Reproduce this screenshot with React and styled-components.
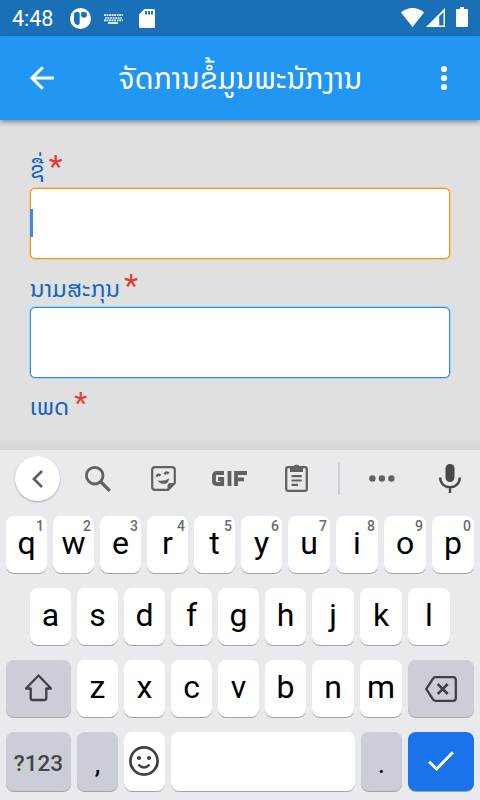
import React from "react";
import styled, { createGlobalStyle } from "styled-components";

const lao = `"Noto Sans Lao", "DejaVu Sans", sans-serif`;

const GlobalStyle = createGlobalStyle`
  * { box-sizing: border-box; }
  body { margin: 0; background: #e0e0e0; overflow: hidden; }
`;

const Screen = styled.div`
  width: 480px;
  height: 800px;
  display: flex;
  flex-direction: column;
  overflow: hidden;
  background: #e0e0e0;
  font-family: Roboto, sans-serif;
`;

const StatusBar = styled.header`
  height: 36px;
  flex: none;
  display: flex;
  align-items: center;
  padding: 0 12px;
  background: #1a70b7;
  color: #fff;
`;

const Clock = styled.time`
  width: 58px;
  font-size: 21.5px;
  line-height: 36px;
  padding-top: 2px;
`;

const Glyph = styled.svg`
  display: block;
  flex: none;
  width: ${(p) => p.$w}px;
  height: ${(p) => p.$h}px;
  margin-left: ${(p) => p.$left || 0}px;
  margin-top: ${(p) => p.$top || 0}px;
  overflow: visible;
`;

const StatusGroup = styled.div`
  display: flex;
  align-items: center;
  margin-left: ${(p) => (p.$end ? "auto" : "0")};
`;

const AppBar = styled.div`
  height: 84px;
  flex: none;
  display: flex;
  align-items: center;
  padding: 0 32px 0 30px;
  background: #2196f3;
  color: #fff;
  box-shadow: 0 2px 5px rgba(0, 0, 0, 0.42);
  z-index: 1;
`;

const IconButton = styled.button`
  display: flex;
  padding: 0;
  border: 0;
  background: none;
  color: inherit;
`;

const Title = styled.h1`
  flex: 1;
  margin: 2px 0 0 64px;
  font: 400 29.65px/40px ${lao};
  white-space: nowrap;
`;

const Form = styled.main`
  height: 330px;
  flex: none;
  padding: 32px 30px 0;
  overflow: hidden;
  background: linear-gradient(#e0e0e0 318px, #d5d5d5 330px);
`;

const Label = styled.label`
  display: flex;
  height: 36px;
  gap: ${(p) => p.$gap || 4}px;
  color: #1565c0;
  font: 400 23.8px/${(p) => p.$line || 36}px ${lao};
  white-space: nowrap;
`;

const Required = styled.span`
  color: #e53935;
  font: 400 ${(p) => p.$size || 32}px/${(p) => p.$line || 28}px Roboto, sans-serif;
`;

const Field = styled.div`
  height: 71px;
  display: flex;
  align-items: center;
  margin-bottom: 12px;
  border: 1px solid ${(p) => (p.$focused ? "#fb9108" : "#2196f3")};
  border-radius: 5px;
  background: #fff;
  box-shadow: 0 0 0 0.5px ${(p) => (p.$focused ? "#fb910890" : "#2196f390")};
`;

const Caret = styled.span`
  width: 3px;
  height: 28px;
  margin: 0 0 2px -1px;
  background: #4285f4;
`;

const Keyboard = styled.section`
  height: 350px;
  flex: none;
  background: #e8eaed;
  color: #000;
`;

const Tools = styled.div`
  height: 66px;
  padding: 6px 19px 0 15px;
  display: grid;
  grid-template-columns: 45px 75px 57px 75px 58px 29px 56px 1fr;
  align-items: start;
  color: #5f6164;
`;

const Tool = styled.div`
  height: 45px;
  display: flex;
  align-items: center;
  justify-content: ${(p) => (p.$end ? "flex-end" : "center")};
`;

const Back = styled(Tool)`
  border-radius: 50%;
  background: #fff;
  box-shadow: 0 1px 2px rgba(0, 0, 0, 0.3);
`;

const Divider = styled.span`
  width: 2px;
  height: 33px;
  margin-right: 1px;
  background: #cdd0d4;
`;

const Keys = styled.div`
  display: grid;
  grid-template-columns: ${(p) => p.$columns};
  grid-auto-rows: ${(p) => p.$height || 57}px;
  gap: 6px;
  padding: 0 6px;
  padding-left: ${(p) => p.$inset || 6}px;
  margin-bottom: 15px;
`;

const Key = styled.button`
  position: relative;
  padding: 0;
  border: 0;
  border-radius: 8px;
  display: flex;
  align-items: center;
  justify-content: center;
  background: ${(p) => (p.$tone === "action" ? "#1a73e8" : p.$tone === "muted" ? "#cbced6" : "#fff")};
  box-shadow: 0 1px 0 rgba(0, 0, 0, 0.3);
  color: ${(p) => (p.$tone === "action" ? "#fff" : "#3f4144")};
`;

const Letter = styled.span`
  color: #000;
  font: 400 32px/38px Roboto, sans-serif;
  padding-bottom: 3px;
`;

const Punctuation = styled.span`
  color: #000;
  font: 400 28px/34px Roboto, sans-serif;
  padding-top: 5px;
`;

const Hint = styled.sup`
  position: absolute;
  top: 2px;
  right: 3px;
  color: #6a6c70;
  font: 500 14px/17px Roboto, sans-serif;
`;

const ModeText = styled.span`
  font: 500 22.5px/30px Roboto, sans-serif;
  padding-top: 2px;
  color: #424549;
`;

function LetterKey({ value, hint }) {
  return (
    <Key>
      <Letter>{value}</Letter>
      {hint && <Hint>{hint}</Hint>}
    </Key>
  );
}

const topRow = [..."qwertyuiop"];
const hints = [..."1234567890"];

export default function App() {
  return (
    <Screen>
      <GlobalStyle />
      <StatusBar>
        <Clock>4:48</Clock>
        <StatusGroup>
          <Glyph $w={21} $h={21} $top={1} viewBox="0 0 21 21">
            <circle cx="10.5" cy="10.5" r="10.5" fill="#fff" />
            <path d="M6 4H8Q9.7 4 9.7 6V14.5Q9.7 17 7.2 17Q4 16 4 12V6.5Q4 4 6 4Z" fill="#1a70b7" />
            <circle cx="14" cy="6.8" r="2.9" fill="#1a70b7" />
            <path d="M11.5 4H14V7H11.5Z" fill="#1a70b7" />
          </Glyph>
          <Glyph $w={19} $h={10} $left={13} $top={1} viewBox="0 0 19 10">
            <path d="M0 1.2H19M1 4H18M0 6.3H19" stroke="#fff" strokeWidth="1.7" strokeDasharray="1.8 .75" />
            <path d="M4 9H14" stroke="#fff" strokeWidth="1.6" />
          </Glyph>
          <Glyph $w={16} $h={19} $left={15.5} $top={0} viewBox="0 0 16 19">
            <path d="M5.5 0H14.5Q16 0 16 1.5V17.5Q16 19 14.5 19H1.5Q0 19 0 17.5V5.5Z" fill="#fff" />
            <path d="M7 2V5.5M10 2V5.5M13 2V5.5" stroke="#1a70b7" strokeWidth="1.9" />
          </Glyph>
        </StatusGroup>
        <StatusGroup $end>
          <Glyph $w={23} $h={19} $top={-1} viewBox="0 0 23 19">
            <path d="M0 4.5C6.5-1.5 16.5-1.5 23 4.5L11.5 19Z" fill="#fff" />
          </Glyph>
          <Glyph $w={19} $h={19} $left={2} $top={-1} viewBox="0 0 19 19">
            <path d="M19 0V19H0Z" fill="#fff" />
            <path d="M13.2 8.2L17.5 4.2V17.5H13.2Z" fill="#1a70b7" />
          </Glyph>
          <Glyph $w={12} $h={20} $left={11} $top={-2} viewBox="0 0 12 20">
            <path d="M4 0H8V2H11Q12 2 12 3V19Q12 20 11 20H1Q0 20 0 19V3Q0 2 1 2H4Z" fill="#fff" />
          </Glyph>
        </StatusGroup>
      </StatusBar>

      <AppBar>
        <IconButton aria-label="Back">
          <Glyph $w={24} $h={24} viewBox="0 0 24 24">
            <path d="M23.8 12H2M12.8 1.2L2 12L12.8 22.8" fill="none" stroke="currentColor" strokeWidth="3" />
          </Glyph>
        </IconButton>
        <Title>ຈັດການຂໍ້ມູນພະນັກງານ</Title>
        <IconButton aria-label="More options">
          <Glyph $w={8} $h={24} viewBox="0 0 8 24">
            <circle cx="4" cy="3" r="3.1" fill="currentColor" />
            <circle cx="4" cy="12" r="3.1" fill="currentColor" />
            <circle cx="4" cy="21" r="3.1" fill="currentColor" />
          </Glyph>
        </IconButton>
      </AppBar>

      <Form>
        <Label>ຊື່<Required>*</Required></Label>
        <Field $focused><Caret /></Field>
        <Label>ນາມສະກຸນ<Required>*</Required></Label>
        <Field />
        <Label $line={33} $gap={5}>ເພດ<Required $size={30} $line={25}>*</Required></Label>
      </Form>

      <Keyboard>
        <Tools>
          <Back>
            <Glyph $w={11} $h={18} viewBox="0 0 11 18">
              <path d="M10 1L2 9L10 17" fill="none" stroke="currentColor" strokeWidth="2.8" />
            </Glyph>
          </Back>
          <Tool>
            <Glyph $w={26} $h={26} $left={1} $top={1} viewBox="0 0 26 26">
              <circle cx="9.7" cy="9.7" r="8.3" fill="none" stroke="currentColor" strokeWidth="2.8" />
              <path d="M15.5 15.5L24.8 24.8" stroke="currentColor" strokeWidth="3.3" />
            </Glyph>
          </Tool>
          <Tool>
            <Glyph $w={25} $h={25} viewBox="0 0 25 25">
              <path d="M4 1.2H21Q23.8 1.2 23.8 4V17L17 23.8H4Q1.2 23.8 1.2 21V4Q1.2 1.2 4 1.2Z" fill="none" stroke="currentColor" strokeWidth="2.2" />
              <path d="M16.5 24.5V20Q16.5 17 19.5 17H24.5ZM6.5 14.2Q12.5 16 18.2 12.2Q17.5 17.7 13.5 17.8Q9 18.2 6.5 14.2Z" fill="currentColor" />
              <path d="M5.5 10.7Q7 7 9.5 9.7M13.5 8.4Q15.4 4.9 17.7 7.6" fill="none" stroke="currentColor" strokeWidth="2.4" />
            </Glyph>
          </Tool>
          <Tool>
            <Glyph $w={35} $h={15} $top={-1} viewBox="0 0 35 15">
              <path d="M12 2H4.5Q2 2 2 4.5V10.5Q2 13 4.5 13H10.2V8H6M17.5 0V15M24 15V2H35M24 8.3H32" fill="none" stroke="currentColor" strokeWidth="3.8" />
            </Glyph>
          </Tool>
          <Tool>
            <Glyph $w={23} $h={29} $left={0} $top={-2} viewBox="0 0 23 29">
              <rect x="1.2" y="4.2" width="20.6" height="23.6" rx="2" fill="none" stroke="currentColor" strokeWidth="2.3" />
              <path fillRule="evenodd" d="M5 4H8.2A3.4 3.4 0 0 1 14.8 4H18V9H5ZM11.5 2.7A1.3 1.3 0 1 0 11.5 5.3A1.3 1.3 0 0 0 11.5 2.7Z" fill="currentColor" />
              <path d="M6.5 13.2H16.7M6.5 17.5H16.7M6.5 21.8H13" stroke="currentColor" strokeWidth="2.2" />
            </Glyph>
          </Tool>
          <Tool><Divider /></Tool>
          <Tool>
            <Glyph $w={26} $h={7} viewBox="0 0 26 7">
              <circle cx="3.4" cy="3.5" r="3.2" fill="currentColor" />
              <circle cx="12.9" cy="3.5" r="3.2" fill="currentColor" />
              <circle cx="22.4" cy="3.5" r="3.2" fill="currentColor" />
            </Glyph>
          </Tool>
          <Tool $end>
            <Glyph $w={22} $h={29} $top={-1} viewBox="0 0 22 29">
              <rect x="6.5" y="0" width="9" height="18" rx="4.5" fill="#46484b" />
              <path d="M1.2 13.5C1.2 26.5 20.8 26.5 20.8 13.5M11 23V29" fill="none" stroke="#46484b" strokeWidth="2.4" />
            </Glyph>
          </Tool>
        </Tools>

        <Keys $columns="repeat(6, 41px) repeat(4, 42px)">
          {topRow.map((value, index) => <LetterKey key={value} value={value} hint={hints[index]} />)}
        </Keys>
        <Keys $columns="repeat(6, 41px) repeat(3, 42px)" $inset={30}>
          {[..."asdfghjkl"].map((value) => <LetterKey key={value} value={value} />)}
        </Keys>
        <Keys $columns="65px repeat(5, 41px) repeat(2, 42px) 66px">
          <Key $tone="muted" aria-label="Shift">
            <Glyph $w={29} $h={27} $top={-2} viewBox="0 0 28 27">
              <path d="M14 1.5L26.5 14.5H21.8V24Q21.8 26 19.8 26H8.2Q6.2 26 6.2 24V14.5H1.5Z" fill="none" stroke="currentColor" strokeWidth="2.3" strokeLinejoin="round" />
            </Glyph>
          </Key>
          {[..."zxcvbnm"].map((value) => <LetterKey key={value} value={value} />)}
          <Key $tone="muted" aria-label="Delete">
            <Glyph $w={32} $h={26} $left={-1} $top={1} viewBox="0 0 32 26">
              <path d="M10.5 1.2H28Q30.8 1.2 30.8 4V22Q30.8 24.8 28 24.8H10.5Q9 24.8 8 23.3L1.2 13L8 2.7Q9 1.2 10.5 1.2Z" fill="none" stroke="currentColor" strokeWidth="2.3" />
              <path d="M12.7 8L22.7 18M22.7 8L12.7 18" stroke="currentColor" strokeWidth="2.5" />
            </Glyph>
          </Key>
        </Keys>
        <Keys $columns="65px 41px 41px 184px 41px 66px" $height={59}>
          <Key $tone="muted"><ModeText>?123</ModeText></Key>
          <Key $tone="muted"><Punctuation>,</Punctuation></Key>
          <Key aria-label="Emoji">
            <Glyph $w={30} $h={30} $left={-1} $top={-1} viewBox="0 0 30 30">
              <circle cx="15" cy="15" r="13.6" fill="none" stroke="currentColor" strokeWidth="2.7" />
              <circle cx="10" cy="12" r="2.1" fill="currentColor" />
              <circle cx="20" cy="12" r="2.1" fill="currentColor" />
              <path d="M9.3 18.6Q15 24.2 20.7 18.6" fill="none" stroke="currentColor" strokeWidth="2.4" />
            </Glyph>
          </Key>
          <Key aria-label="Space" />
          <Key $tone="muted"><Punctuation>.</Punctuation></Key>
          <Key $tone="action" aria-label="Done">
            <Glyph $w={26} $h={20} $top={-1} viewBox="0 0 26 20">
              <path d="M1.1 10.8L8.6 18L24.9 1.2" fill="none" stroke="currentColor" strokeWidth="2.9" />
            </Glyph>
          </Key>
        </Keys>
      </Keyboard>
    </Screen>
  );
}
